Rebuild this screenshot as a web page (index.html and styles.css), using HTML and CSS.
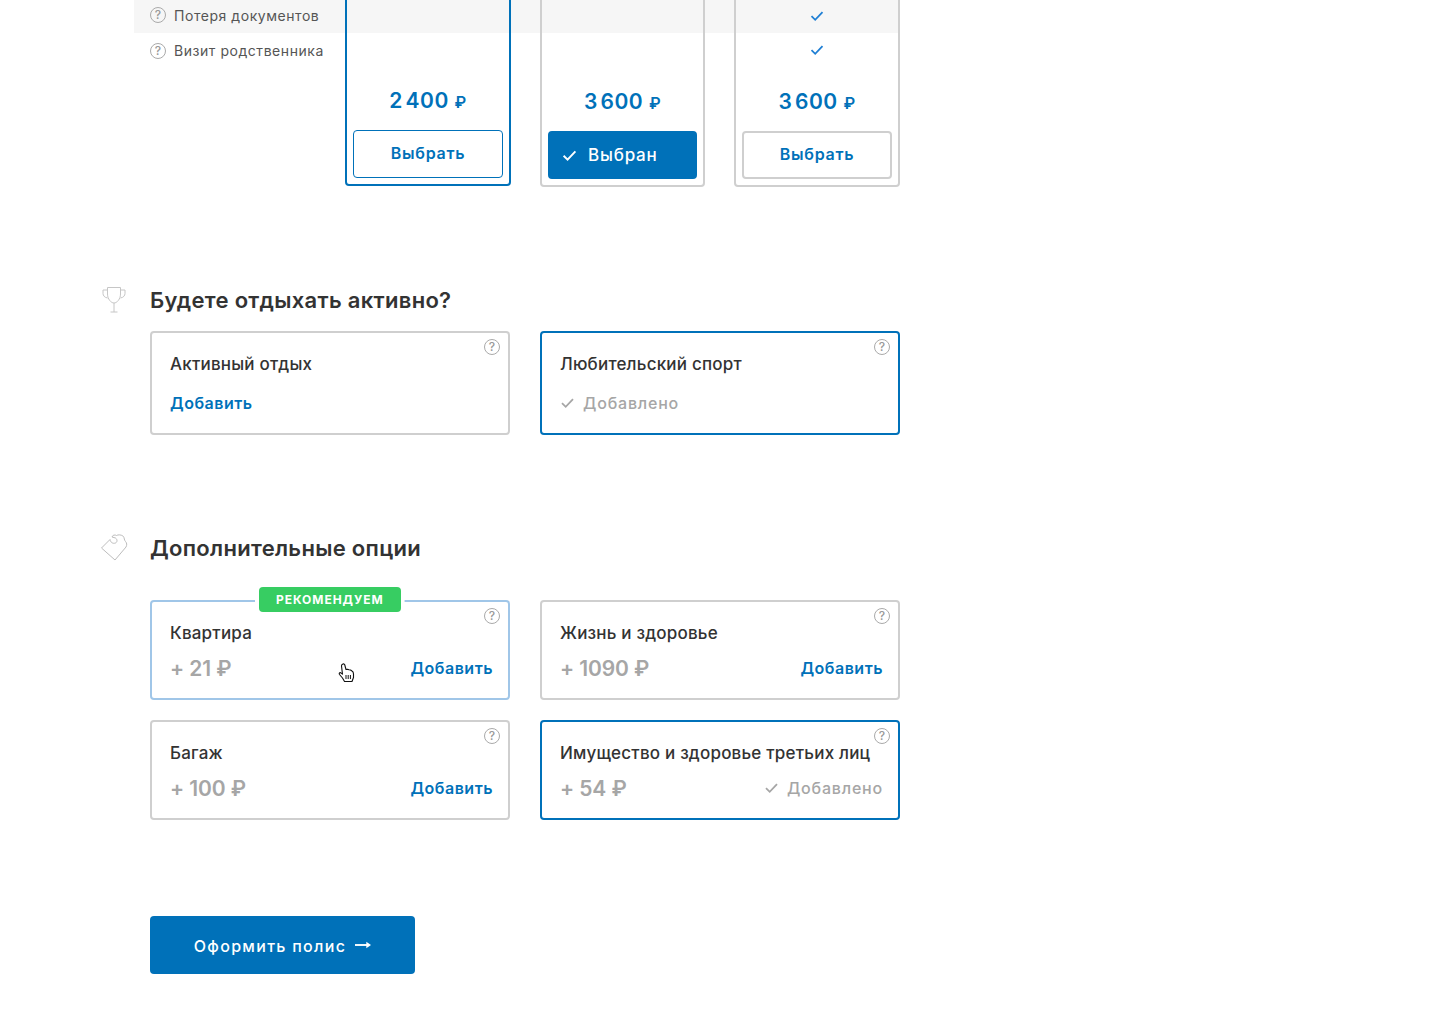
FILE: index.html
```html
<!DOCTYPE html>
<html lang="ru">
<head>
<meta charset="utf-8">
<title>Оформление полиса</title>
<link rel="stylesheet" href="styles.css">
</head>
<body>
<svg class="defs" width="0" height="0" aria-hidden="true">
  <symbol id="check" viewBox="0 0 14 12"><path d="M1.5 6.2 5.2 9.8 12.5 2.2" fill="none" stroke="currentColor" stroke-width="1.8"/></symbol>
</svg>
<main class="page">
  <section class="plans">
    <div class="band"></div>
    <div class="risk risk-a"><span class="help">?</span>Потеря документов</div>
    <div class="risk risk-b"><span class="help">?</span>Визит родственника</div>

    <article class="plan plan-a plan-active">
      <div class="price">2 400 <span class="rub">₽</span></div>
      <button class="choose choose-active">Выбрать</button>
    </article>
    <article class="plan plan-b">
      <div class="price">3 600 <span class="rub">₽</span></div>
      <button class="choose choose-selected"><svg class="ico-check-w"><use href="#check"/></svg>Выбран</button>
    </article>
    <article class="plan plan-c">
      <div class="price">3 600 <span class="rub">₽</span></div>
      <button class="choose">Выбрать</button>
    </article>
    <svg class="tick tick-a"><use href="#check"/></svg>
    <svg class="tick tick-b"><use href="#check"/></svg>
  </section>

  <section class="group">
    <h2 class="group-title">
      <span class="group-icon">
        <svg width="26" height="26" viewBox="0 0 26 26"><path d="M6.5 .5H19.5V7C19.5 12 16 16 13 16S6.500 12 6.500 7ZM6.500 3H2V6.500C2 8.500 3.500 10.500 6.500 11M19.500 3H24V6.500C24 8.500 22.500 10.500 19.500 11M13 16V25M9.500 25H16.500" fill="none" stroke="#c6c6c6"/></svg>
      </span>Будете отдыхать активно?
    </h2>
    <div class="options options-stack">
      <div class="option">
        <span class="help help-card">?</span>
        <div class="option-name">Активный отдых</div>
        <a class="add add-low">Добавить</a>
      </div>
      <div class="option option-on">
        <span class="help help-card">?</span>
        <div class="option-name">Любительский спорт</div>
        <span class="added added-low"><svg class="ico-check-g"><use href="#check"/></svg>Добавлено</span>
      </div>
    </div>
  </section>

  <section class="group">
    <h2 class="group-title">
      <span class="group-icon">
        <svg width="28" height="28" viewBox="0 0 28 28"><path d="M.5 14 9 5.500C9.500 8.500 12 10 14.500 9C16.500 8 16.500 5.500 14.500 4L11 3C11.500 1 14 .5 15.500 1.500C17 .5 20.500 .5 22.500 2.500C23.500 4 23 6 24.500 7.500C26 9 26 11 25 13L14 26Z" fill="none" stroke="#bdbdbd" stroke-linejoin="round"/></svg>
      </span>Дополнительные опции
    </h2>
    <div class="options options-priced">
      <div class="option option-rec">
        <span class="badge">Рекомендуем</span>
        <span class="help help-card">?</span>
        <div class="option-name">Квартира</div>
        <div class="option-foot"><span class="cost">+ 21 ₽</span><a class="add">Добавить</a></div>
        <svg class="cursor" width="17" height="20" viewBox="0 0 17 20"><path d="M4.500 1.200C5.500 .5 6.500 1 6.800 2L8 6.500 9.500 6.200 11 6.800 12.500 7 14 8C15 8.500 15.500 9.500 15.500 11V14.500L14 18.500H6.500L4.500 15 1.500 11.500C.8 10.500 1.500 9.300 2.800 9.800L4.500 11.200 3.500 3C3.400 2.200 3.800 1.600 4.500 1.200Z" fill="#fff" stroke="#111" stroke-width="1.100" stroke-linejoin="round"/><path d="M8 12V16M10.200 12V16M12.400 12V16" stroke="#111"/></svg>
      </div>
      <div class="option">
        <span class="help help-card">?</span>
        <div class="option-name">Жизнь и здоровье</div>
        <div class="option-foot"><span class="cost">+ 1090 ₽</span><a class="add">Добавить</a></div>
      </div>
      <div class="option">
        <span class="help help-card">?</span>
        <div class="option-name">Багаж</div>
        <div class="option-foot"><span class="cost">+ 100 ₽</span><a class="add">Добавить</a></div>
      </div>
      <div class="option option-on">
        <span class="help help-card">?</span>
        <div class="option-name">Имущество и здоровье третьих лиц</div>
        <div class="option-foot"><span class="cost">+ 54 ₽</span><span class="added"><svg class="ico-check-g"><use href="#check"/></svg>Добавлено</span></div>
      </div>
    </div>
  </section>

  <button class="submit"><span class="submit-text">Оформить полис</span>
    <svg width="16" height="10" viewBox="0 0 17 10"><path d="M0 5H13" fill="none" stroke="#fff" stroke-width="2"/><path d="M12 1.500 17 5 12 8.500Z" fill="#fff"/></svg>
  </button>
</main>
</body>
</html>
```
FILE: styles.css
```css
* { box-sizing: border-box; }
html, body { margin: 0; padding: 0; background: #fff; }
body { font-family: Inter, "Noto Sans", "Liberation Sans", sans-serif; color: #333; height: 1024px; overflow: hidden; }
.defs { position: absolute; }
.page { width: 900px; padding-left: 150px; }

/* plan comparison */
.plans {
  display: grid;
  margin: -4px 0 0 -16px;
  grid-template-columns: 211px 166px 29px 165px 29px 166px;
  grid-template-rows: 37px 35px 119px;
}
.band { grid-row: 1; grid-column: 1 / -1; background: #f6f6f6; }
.risk { grid-column: 1; padding-left: 16px; display: flex; align-items: center; gap: 8px; font-size: 14px; color: #555; letter-spacing: .55px; white-space: nowrap; }
.risk-a { grid-row: 1; padding-top: 1px; }
.risk-b { grid-row: 2; }
.help { display: inline-flex; align-items: center; justify-content: center; flex: none; width: 16px; height: 16px; border: 1px solid #aaa; border-radius: 50%; font-size: 12px; line-height: 1; font-weight: 500; color: #999; letter-spacing: 0; }
.plan { grid-row: 1 / 4; border: 2px solid #cfcfcf; border-radius: 4px; padding: 0 6px 6px; display: flex; flex-direction: column; justify-content: flex-end; }
.plan-a { grid-column: 2; }
.plan-b { grid-column: 4; }
.plan-c { grid-column: 6; }
.plan-active { border-color: #0071b9; margin-bottom: 1px; }
.price { height: 28px; margin-bottom: 15px; text-align: center; font-size: 21px; line-height: 28px; font-weight: 600; color: #0071b9; letter-spacing: .5px; word-spacing: -3px; }
.rub { font-size: 16px; margin-left: 3px; }
.choose { height: 48px; width: 100%; padding: 0 0 2px; border: 2px solid #cfcfcf; border-radius: 4px; background: #fff; color: #0071b9; font: 600 16px Inter, "Noto Sans", sans-serif; letter-spacing: .7px; }
.choose-active { border: 1px solid #0071b9; }
.choose-selected { background: #0071b9; border-color: #0071b9; color: #fff; display: flex; align-items: center; padding: 0 0 0 12px; gap: 11px; font-size: 17px; font-weight: 500; letter-spacing: .8px; border-radius: 4px; }
.ico-check-w { width: 15px; height: 13px; color: #fff; }
.tick { width: 14px; height: 12px; color: #1f7fd4; justify-self: center; align-self: center; grid-column: 6; }
.tick-a { grid-row: 1; margin-top: 2px; }
.tick-b { grid-row: 2; margin-bottom: 2px; }

/* groups */
.group { margin-top: 99px; }
.group-title { display: flex; align-items: center; height: 28px; margin: 0 0 17px -50px; font-size: 22px; line-height: 28px; font-weight: 600; color: #333; letter-spacing: .3px; }
.group-icon { display: flex; flex: none; width: 50px; padding-left: 1px; }
.options { display: grid; grid-template-columns: 360px 360px; gap: 20px 30px; }
.options-stack .option { height: 104px; }
.options-priced { margin-top: 38px; grid-auto-rows: 100px; }
.option { position: relative; border: 2px solid #cfcfcf; border-radius: 4px; padding: 20px 15px 0 18px; background: #fff; }
.option-on { border-color: #0071b9; }
.option-rec { border-color: #a0c6e8; }
.option-name { font-size: 17px; line-height: 22px; font-weight: 500; color: #333; letter-spacing: .2px; white-space: nowrap; }
.options-priced .option { padding-top: 20px; }
.option-foot { display: flex; justify-content: space-between; align-items: center; margin-top: 10px; height: 28px; }
.add { font-size: 16px; font-weight: 600; color: #0071b9; letter-spacing: .5px; }
.add-low { display: block; margin-top: 17px; line-height: 22px; }
.added { display: inline-flex; align-items: center; gap: 8px; font-size: 16px; font-weight: 500; color: #a6a6a6; letter-spacing: .8px; }
.added-low { margin-top: 17px; line-height: 22px; }
.ico-check-g { width: 15px; height: 12px; color: #a6a6a6; }
.cost { font-size: 21px; font-weight: 600; color: #a6a6a6; letter-spacing: -.1px; }
.help-card { position: absolute; top: 6px; right: 8px; }
.badge { position: absolute; top: -15px; left: 107px; height: 25px; padding: 0 17px; border-radius: 4px; background: #37cd62; color: #fff; font-size: 12px; line-height: 25px; font-weight: 700; letter-spacing: .95px; text-transform: uppercase; box-shadow: 0 0 0 4px #fff; clip-path: inset(0 -4px -4px -4px); white-space: nowrap; }
.cursor { position: absolute; left: 186px; top: 61px; }

/* submit */
.submit { display: flex; align-items: center; justify-content: center; gap: 9px; width: 265px; height: 58px; margin-top: 96px; border: 0; border-radius: 4px; background: #0071b9; color: #fff; font: 500 16px Inter, "Noto Sans", sans-serif; letter-spacing: 1.3px; }
.submit-text { padding-top: 2px; }
```
